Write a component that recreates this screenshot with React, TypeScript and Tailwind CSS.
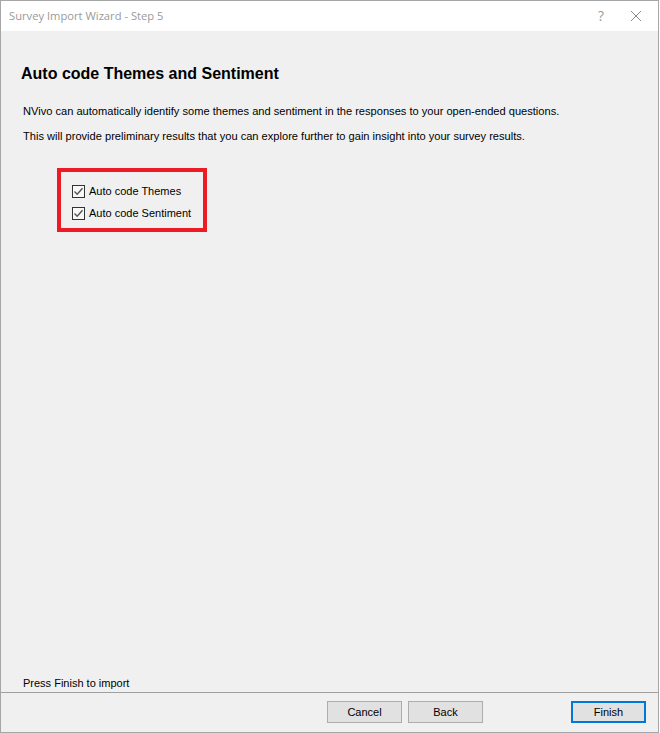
import React from "react";

function Check() {
  return (
    <span className="w-[13px] h-[13px] border border-[#333333] bg-[#f8f8f8] flex items-center justify-center shrink-0">
      <svg width="11" height="11" viewBox="0 0 11 11">
        <path d="M1.5 5.5 L4.2 8.2 L9.5 2.2" fill="none" stroke="#555555" strokeWidth="1.4" />
      </svg>
    </span>
  );
}

export default function App() {
  const sans = { fontFamily: '"Liberation Sans", Arial, sans-serif' };
  return (
    <div className="w-[660px] h-[733px] bg-white">
      <div
        className="w-[659px] h-[733px] border border-[#a6a6a6] bg-[#f0f0f0] flex flex-col"
        style={sans}
      >
        <div className="h-[30px] bg-white flex items-center shrink-0">
          <span
            className="ml-[8px] text-[11.2px] text-[#9a9a9a]"
            style={{ fontFamily: '"Open Sans", "Noto Sans", sans-serif' }}
          >
            Survey Import Wizard - Step 5
          </span>
          <span
            className="ml-auto mr-[26px] text-[14px] text-[#9a9a9a] leading-none"
            style={{ fontFamily: '"Open Sans", "Noto Sans", sans-serif' }}
          >
            ?
          </span>
          <svg width="12" height="12" viewBox="0 0 12 12" className="mr-[16px]">
            <path d="M1 1 L11 11 M11 1 L1 11" stroke="#8a8a8a" strokeWidth="1" fill="none" />
          </svg>
        </div>

        <div className="flex-1 flex flex-col px-[20px]">
          <h1 className="mt-[34px] text-[16px] leading-[18px] font-bold text-black">
            Auto code Themes and Sentiment
          </h1>
          <p className="mt-[21px] ml-[2px] text-[11.1px] leading-[15px] text-black">
            NVivo can automatically identify some themes and sentiment in the responses to your open-ended questions.
          </p>
          <p className="mt-[10px] ml-[2px] text-[11.1px] leading-[15px] text-black">
            This will provide preliminary results that you can explore further to gain insight into your survey results.
          </p>

          <div className="mt-[24px] ml-[36px] w-[150px] border-[4px] border-[#ed1c24] pl-[11px] pt-[8px] pb-[4px] flex flex-col">
            <label className="h-[22px] flex items-center gap-[4px] text-[11px] text-black">
              <Check />
              <span>Auto code Themes</span>
            </label>
            <label className="h-[22px] flex items-center gap-[4px] text-[11px] text-black">
              <Check />
              <span>Auto code Sentiment</span>
            </label>
          </div>

          <p className="mt-auto mb-[1px] ml-[2px] text-[11px] leading-[15px] text-black">
            Press Finish to import
          </p>
        </div>

        <div className="h-[40px] border-t border-[#a0a0a0] flex items-start pt-[8px] shrink-0">
          <button className="ml-[326px] w-[75px] h-[22px] bg-[#e1e1e1] border border-[#adadad] text-[11px] text-black flex items-center justify-center">
            Cancel
          </button>
          <button className="ml-[6px] w-[75px] h-[22px] bg-[#e1e1e1] border border-[#adadad] text-[11px] text-black flex items-center justify-center">
            Back
          </button>
          <button className="ml-[88px] w-[75px] h-[22px] bg-[#e1e1e1] border-2 border-[#0078d7] text-[11px] text-black flex items-center justify-center">
            Finish
          </button>
        </div>
      </div>
    </div>
  );
}
